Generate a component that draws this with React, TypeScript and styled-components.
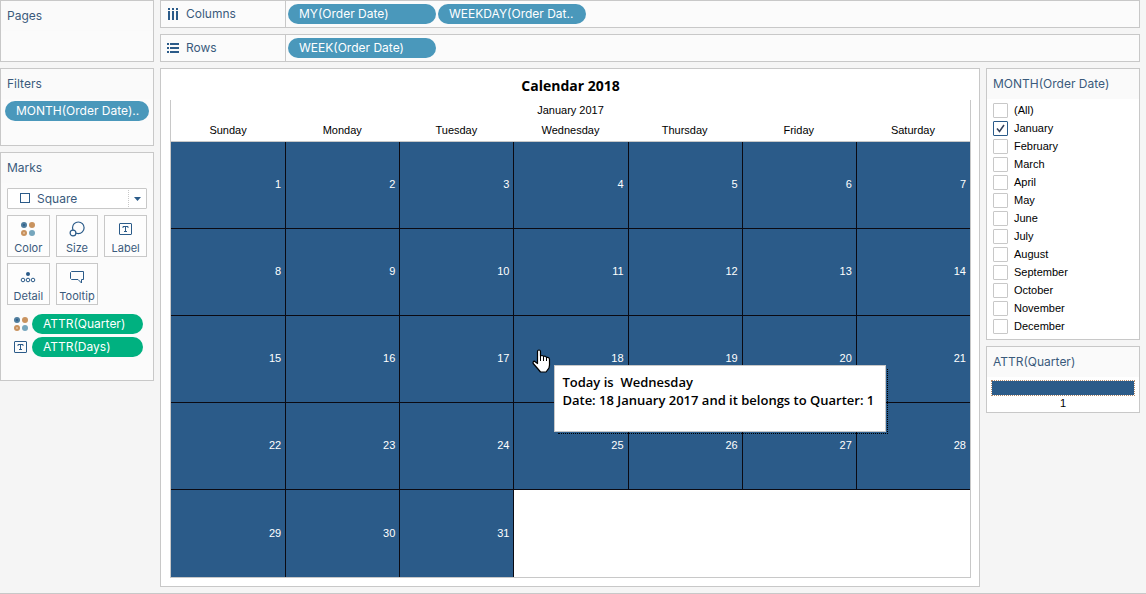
import React, { useState } from 'react';
import styled, { createGlobalStyle } from 'styled-components';

const navy = '#2b5b89';
const ink = '#3a5a7c';
const line = '#c8c8c8';
const uiFont = "Inter, 'Liberation Sans', sans-serif";
const cellFont = "'Liberation Sans', Arial, sans-serif";
const titleFont = "'Open Sans', 'Noto Sans', sans-serif";

const GlobalStyle = createGlobalStyle`
  *, *::before, *::after { box-sizing: border-box; }
  body { margin: 0; background: #f5f5f5; color: #000; font: 11px ${cellFont}; }
  button, select, input { font: inherit; color: inherit; margin: 0; }
`;

const Page = styled.div`
  display: grid;
  grid-template-columns: 154px minmax(0, 1fr);
  gap: 6px;
  padding: 0 6px 6px 0;
  border-bottom: 1px solid ${line};
`;

const Stack = styled.div`
  display: flex;
  flex-direction: column;
  gap: 6px;
  min-width: 0;
`;

const Work = styled.div`
  display: grid;
  grid-template-columns: minmax(0, 1fr) 154px;
  gap: 6px;
`;

const Panel = styled.section<{ $min?: number; $white?: boolean }>`
  border: 1px solid ${line};
  background: ${(p) => (p.$white ? '#fff' : '#fbfbfb')};
  min-height: ${(p) => p.$min ?? 0}px;
`;

const PanelTitle = styled.h2`
  margin: 0;
  padding: 0 6px;
  background: #fafafa;
  color: ${ink};
  font: 400 12px/30px ${uiFont};
`;

const Shelf = styled.section`
  display: flex;
  align-items: stretch;
  height: 28px;
  border: 1px solid ${line};
  background: #fbfbfb;
`;

const ShelfName = styled.h2`
  display: flex;
  align-items: center;
  gap: 7px;
  width: 125px;
  margin: 0;
  padding-left: 6px;
  border-right: 1px solid ${line};
  color: ${ink};
  font: 400 12px/26px ${uiFont};
`;

const ShelfPills = styled.div`
  display: flex;
  align-items: center;
  gap: 2px;
  padding-left: 2px;
`;

const Pill = styled.button<{ $green?: boolean; $width?: string }>`
  width: ${(p) => p.$width ?? '148px'};
  height: 20px;
  padding: 0 0 0 11px;
  border: 0;
  border-radius: 10px;
  background: ${(p) => (p.$green ? '#00b180' : '#4a98bb')};
  color: #fff;
  font: 400 12px/20px ${uiFont};
  text-align: left;
  white-space: nowrap;
`;

const FilterBody = styled.div`
  padding: 2px 4px;
`;

const MarksBody = styled.div`
  display: flex;
  flex-direction: column;
  gap: 6px;
  padding: 5px 6px 0;
`;

const MarkType = styled.div`
  position: relative;
  color: ${ink};
  font: 12px ${uiFont};

  select {
    display: block;
    width: 100%;
    height: 21px;
    padding: 0 0 0 29px;
    appearance: none;
    border: 1px solid ${line};
    border-radius: 1px;
    background: #fff;
  }
  svg {
    position: absolute;
    inset: 0;
    pointer-events: none;
  }
  svg:last-child {
    left: auto;
  }
`;

const MarkGrid = styled.div`
  display: grid;
  grid-template-columns: repeat(3, minmax(0, 1fr));
  gap: 6px;
`;

const MarkButton = styled.button`
  display: flex;
  flex-direction: column;
  align-items: center;
  justify-content: space-between;
  height: 42px;
  padding: 5px 0 1px;
  border: 1px solid ${line};
  background: #fdfdfd;
  color: ${ink};
  font: 11px/14px ${uiFont};
  white-space: nowrap;
`;

const Encodings = styled.div`
  display: flex;
  flex-direction: column;
  gap: 3px;
  padding: 3px 4px 0 6px;
`;

const Encoding = styled.div`
  display: flex;
  align-items: center;
  gap: 3px;
`;

const View = styled.main`
  padding: 0 8px 8px 9px;
  border: 1px solid ${line};
  background: #fff;
`;

const ViewTitle = styled.h1`
  margin: 0;
  padding-top: 2px;
  font: 700 14px/29px ${titleFont};
  text-align: center;
`;

const Calendar = styled.table`
  width: 100%;
  table-layout: fixed;
  border: 1px solid ${line};
  border-top: 0;
  border-collapse: separate;
  border-spacing: 0;

  th {
    height: 20px;
    padding: 0;
    font-weight: 400;
    line-height: 18px;
  }
  tr + tr th {
    height: 22px;
    padding-bottom: 2px;
    border-bottom: 1px solid ${line};
  }
`;

const Day = styled.td<{ $first: boolean; $bottom: boolean; $empty: boolean; $edge: boolean }>`
  position: relative;
  height: 87px;
  padding: 0 4px 2px 0;
  border: 0 solid #0a0a12;
  border-left-width: ${(p) => (p.$first || (p.$empty && !p.$edge) ? 0 : 1)}px;
  border-bottom-width: ${(p) => (p.$bottom ? 0 : 1)}px;
  background: ${(p) => (p.$empty ? '#fff' : navy)};
  color: #fff;
  text-align: right;
`;

const Tip = styled.div`
  position: absolute;
  z-index: 2;
  top: 49px;
  left: 40px;
  height: 67px;
  padding: 7px 11px 0 7px;
  border: 1px solid ${line};
  background: #fff;
  color: #000;
  font: 600 13px/18px ${titleFont};
  text-align: left;
  white-space: pre;

  &::after {
    content: '';
    position: absolute;
    inset: 3px -3px -3px 3px;
    border: 1px dotted #000;
    border-top: 0;
    border-left: 0;
  }
`;

const Hand = styled.svg`
  position: absolute;
  z-index: 3;
  top: 33px;
  left: 18px;
`;

const CheckList = styled.div`
  display: flex;
  flex-direction: column;
  padding: 2px 6px 4px;
`;

const CheckRow = styled.label`
  display: flex;
  align-items: center;
  gap: 6px;
  height: 18px;
`;

const CheckBox = styled.span`
  position: relative;
  width: 15px;
  height: 15px;

  input {
    display: block;
    width: 15px;
    height: 15px;
    appearance: none;
    border: 1px solid ${line};
    border-radius: 1px;
    background: #fff;
  }
  input:checked {
    border-color: ${navy};
  }
  svg {
    position: absolute;
    inset: 0;
    pointer-events: none;
  }
  input:not(:checked) + svg {
    display: none;
  }
`;

const Legend = styled.div`
  padding: 3px 4px 2px;
  text-align: center;
  line-height: 14px;
`;

const LegendBar = styled.div`
  height: 16px;
  border: 1px dotted #b08a6c;
  background: ${navy} padding-box;
`;

const ColorIcon = () => (
  <svg width="16" height="16" viewBox="0 0 16 16" aria-hidden="true">
    <circle cx="4" cy="4" r="3" fill="#4f7d9d" />
    <circle cx="12" cy="4" r="3" fill="#c9935f" />
    <circle cx="4" cy="12" r="3" fill="#c9935f" />
    <circle cx="12" cy="12" r="3" fill="#76a6bd" />
    <path d="M3 4h2M4 3v2" stroke={navy} />
    <path d="M3 12h2M4 11v2" stroke="#e5c3a4" />
  </svg>
);

const SizeIcon = () => (
  <svg width="16" height="16" viewBox="0 0 16 16" fill="none" stroke={navy} strokeWidth="1.200" aria-hidden="true">
    <circle cx="9.300" cy="6.800" r="5.800" />
    <circle cx="4" cy="12" r="2.900" fill="#fff" />
  </svg>
);

const LabelIcon = () => (
  <svg width="16" height="16" viewBox="0 0 16 16" fill="none" stroke={navy} aria-hidden="true">
    <rect x="1.5" y="2.5" width="12" height="11" rx="0.5" />
    <path d="M5 7V5.500h5V7M7.500 5.500v5M6 10.500h3" />
  </svg>
);

const DetailIcon = () => (
  <svg width="16" height="16" viewBox="0 0 16 16" fill="none" stroke={navy} aria-hidden="true">
    <circle cx="8" cy="5" r="2" fill={navy} stroke="none" />
    <circle cx="3" cy="11" r="1.800" />
    <circle cx="8" cy="11" r="1.800" />
    <circle cx="13" cy="11" r="1.800" />
  </svg>
);

const TooltipIcon = () => (
  <svg width="16" height="16" viewBox="0 0 16 16" fill="none" stroke={navy} aria-hidden="true">
    <path d="M2.500 2.500h12v8h-2v3.500l-3.500-3.500H2.500l-1-1v-6z" />
  </svg>
);

const ColumnsIcon = () => (
  <svg width="12" height="12" viewBox="0 0 12 12" fill={navy} aria-hidden="true">
    <path d="M1 0h2v2H1zM5 0h2v2H5zM9 0h2v2H9zM1 3h2v9H1zM5 3h2v9H5zM9 3h2v9H9z" />
  </svg>
);

const RowsIcon = () => (
  <svg width="12" height="12" viewBox="0 0 12 12" fill={navy} aria-hidden="true">
    <path d="M0 1h2v2H0zM0 5h2v2H0zM0 9h2v2H0zM3 1h9v2H3zM3 5h9v2H3zM3 9h9v2H3z" />
  </svg>
);

const HandCursor = () => (
  <Hand width="19" height="25" viewBox="0 0 19 25" aria-hidden="true">
    <path
      d="M5.500 2.500Q5.500 1 7 1t1.500 1.500V7Q10.500 5.800 11.500 7.500 13.500 6.500 14.500 8.500 17.500 7.800 17.500 10.500V16Q17.500 19 15.500 21L14 23H8.500L6 20 1.200 14.500Q.5 12.500 2.500 12.200L5.500 14.500Z"
      fill="#fff"
      stroke="#000"
      strokeWidth="1.200"
      strokeLinejoin="round"
    />
    <path d="M8.500 7v5M11.500 7.500V12M14.500 8.500V12" stroke="#000" fill="none" />
  </Hand>
);

const markButtons = [
  { name: 'Color', Icon: ColorIcon },
  { name: 'Size', Icon: SizeIcon },
  { name: 'Label', Icon: LabelIcon },
  { name: 'Detail', Icon: DetailIcon },
  { name: 'Tooltip', Icon: TooltipIcon },
];

const weekdays = ['Sunday', 'Monday', 'Tuesday', 'Wednesday', 'Thursday', 'Friday', 'Saturday'];
const months = [
  '(All)', 'January', 'February', 'March', 'April', 'May', 'June',
  'July', 'August', 'September', 'October', 'November', 'December',
];
const DAYS = 31;
const HOVERED = 18;

export default function App() {
  const [checked, setChecked] = useState<string[]>(['January']);
  const toggle = (m: string) =>
    setChecked((c) => (c.includes(m) ? c.filter((x) => x !== m) : [...c, m]));

  return (
    <>
      <GlobalStyle />
      <Page>
        <Stack>
          <Panel $min={62}>
            <PanelTitle>Pages</PanelTitle>
          </Panel>
          <Panel $min={78}>
            <PanelTitle>Filters</PanelTitle>
            <FilterBody>
              <Pill $width="100%">MONTH(Order Date)..</Pill>
            </FilterBody>
          </Panel>
          <Panel $min={229}>
            <PanelTitle>Marks</PanelTitle>
            <MarksBody>
              <MarkType>
                <select aria-label="Mark type" defaultValue="Square">
                  <option>Square</option>
                </select>
                <svg width="30" height="21" fill="none" stroke={navy} aria-hidden="true">
                  <rect x="13.500" y="5.500" width="9" height="9" />
                </svg>
                <svg width="20" height="21" aria-hidden="true">
                  <path d="M1.500 2v17" stroke={line} strokeDasharray="1 1" />
                  <path d="M7 9h7l-3.500 4z" fill={navy} />
                </svg>
              </MarkType>
              <MarkGrid>
                {markButtons.map(({ name, Icon }) => (
                  <MarkButton key={name}>
                    <Icon />
                    {name}
                  </MarkButton>
                ))}
              </MarkGrid>
              <Encodings>
                <Encoding>
                  <ColorIcon />
                  <Pill $green $width="111px">ATTR(Quarter)</Pill>
                </Encoding>
                <Encoding>
                  <LabelIcon />
                  <Pill $green $width="111px">ATTR(Days)</Pill>
                </Encoding>
              </Encodings>
            </MarksBody>
          </Panel>
        </Stack>
        <Stack>
          <Shelf>
            <ShelfName><ColumnsIcon />Columns</ShelfName>
            <ShelfPills>
              <Pill>MY(Order Date)</Pill>
              <Pill>WEEKDAY(Order Dat..</Pill>
            </ShelfPills>
          </Shelf>
          <Shelf>
            <ShelfName><RowsIcon />Rows</ShelfName>
            <ShelfPills>
              <Pill>WEEK(Order Date)</Pill>
            </ShelfPills>
          </Shelf>
          <Work>
            <View>
              <ViewTitle>Calendar 2018</ViewTitle>
              <Calendar>
                <thead>
                  <tr><th colSpan={7}>January 2017</th></tr>
                  <tr>{weekdays.map((d) => <th key={d} scope="col">{d}</th>)}</tr>
                </thead>
                <tbody>
                  {[0, 1, 2, 3, 4].map((week) => (
                    <tr key={week}>
                      {weekdays.map((name, i) => {
                        const day = week * 7 + i + 1;
                        return (
                          <Day
                            key={name}
                            $first={i === 0}
                            $bottom={week === 4}
                            $empty={day > DAYS}
                            $edge={day === DAYS + 1}
                          >
                            {day <= DAYS && day}
                            {day === HOVERED && (
                              <>
                                <HandCursor />
                                <Tip role="tooltip">
                                  {'Today is  Wednesday\nDate: 18 January 2017 and it belongs to Quarter: 1'}
                                </Tip>
                              </>
                            )}
                          </Day>
                        );
                      })}
                    </tr>
                  ))}
                </tbody>
              </Calendar>
            </View>
            <Stack>
              <Panel $white>
                <PanelTitle>MONTH(Order Date)</PanelTitle>
                <CheckList>
                  {months.map((m) => (
                    <CheckRow key={m}>
                      <CheckBox>
                        <input type="checkbox" checked={checked.includes(m)} onChange={() => toggle(m)} />
                        <svg width="15" height="15" fill="none" stroke="#33415c" strokeWidth="1.500" aria-hidden="true">
                          <path d="M4 7.500l2.500 3L11 4" />
                        </svg>
                      </CheckBox>
                      {m}
                    </CheckRow>
                  ))}
                </CheckList>
              </Panel>
              <Panel $white>
                <PanelTitle>ATTR(Quarter)</PanelTitle>
                <Legend>
                  <LegendBar />
                  1
                </Legend>
              </Panel>
            </Stack>
          </Work>
        </Stack>
      </Page>
    </>
  );
}
